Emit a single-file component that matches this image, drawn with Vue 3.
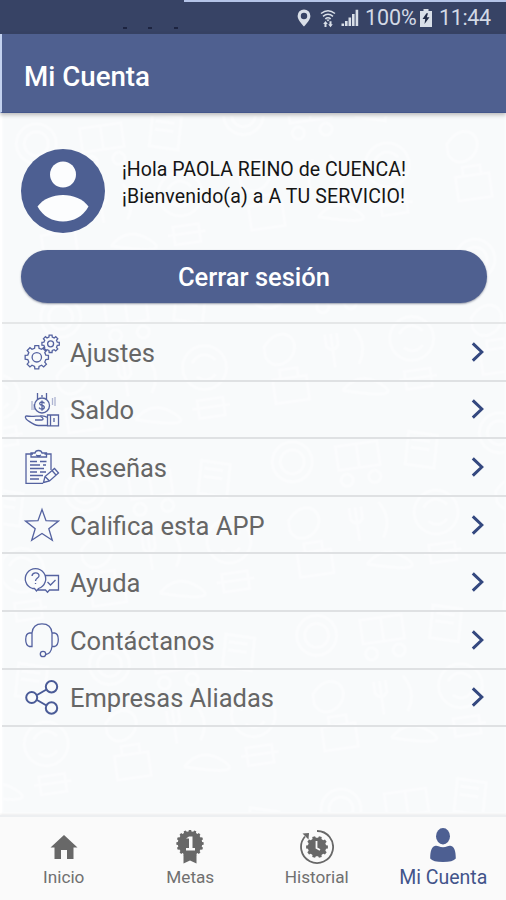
<script setup>
const gear = (cx, cy, ro, ri, n) => {
  const pts = []
  for (let i = 0; i < n; i++) {
    const a = (i * 2 * Math.PI) / n
    const w = Math.PI / n
    for (const [r, o] of [[ri, -0.62], [ro, -0.42], [ro, 0.42], [ri, 0.62]]) {
      pts.push(`${(cx + r * Math.cos(a + o * w)).toFixed(2)} ${(cy + r * Math.sin(a + o * w)).toFixed(2)}`)
    }
  }
  return `M${pts.join('L')}Z`
}
const items = [
  { id: 'gears', label: 'Ajustes' },
  { id: 'money', label: 'Saldo' },
  { id: 'notes', label: 'Reseñas' },
  { id: 'star', label: 'Califica esta APP' },
  { id: 'help', label: 'Ayuda' },
  { id: 'headset', label: 'Contáctanos' },
  { id: 'share', label: 'Empresas Aliadas' },
]
const bigGear = gear(11.8, 22.3, 11.8, 9.3, 8)
const smallGear = gear(25.6, 8.8, 8.8, 6.9, 8)
const rosette = gear(14, 13.5, 13.7, 12.2, 16)
const clockGear = gear(17, 18, 11, 9.2, 10)
</script>

<template>
  <div class="screen">
    <div class="status">
      <div class="edge"></div>
      <i class="speck s1"></i><i class="speck s2"></i><i class="speck s3"></i>
      <svg class="pin" viewBox="0 0 14 18"><path fill-rule="evenodd" d="M7 .5a6.4 6.4 0 0 0-6.4 6.4C.6 11 7 17.500 7 17.500S13.400 11 13.400 6.900A6.400 6.400 0 0 0 7 .5Zm0 3.300a3.200 3.200 0 1 1 0 6.400 3.200 3.200 0 0 1 0-6.400Z" /></svg>
      <svg class="wifi" viewBox="0 0 16 19">
        <path class="arc" d="M1 4.500Q8-1 15 4.500M3 7.300q5-4 10 0M5.300 9.800q2.700-2.200 5.400 0" />
        <path d="M6.200 10.500h3.600L8 12.600ZM5.500 12l2.300 3H6.500v3h-2v-3H3.200ZM10.500 18.200 8.200 15.200h1.300v-3h2v3h1.300Z" />
      </svg>
      <svg class="signal" viewBox="0 0 18 18"><path d="M.5 14.500h2.600V17H.5ZM4 12h2.600v5H4ZM7.500 8.500h2.600V17H7.500ZM11 5h2.600v12H11ZM14.600.8h2.600V17h-2.600Z" /></svg>
      <span class="pct">100%</span>
      <svg class="battery" viewBox="0 0 12 18"><path d="M3.500 0h5v2H12v16H0V2h3.500Z" /><path class="bolt" d="M6.500 4.300 2.500 10h2.700l-.7 5 5-6.700H6.800L8 4.300Z" /></svg>
      <span class="time">11:44</span>
    </div>
    <header class="bar"><h1>Mi Cuenta</h1></header>

    <main class="content">
      <svg class="doodles" viewBox="0 0 506 702">
        <defs>
          <pattern id="doodle" width="210" height="176" patternUnits="userSpaceOnUse" patternTransform="rotate(-8)">
            <circle cx="30" cy="34" r="20" /><circle cx="30" cy="34" r="12" />
            <path d="M75 25h42v24H75ZM82 54a6 6 0 1 0 .1 0M110 54a6 6 0 1 0 .1 0M96 25v24" />
            <path d="m150 20 28 8-8 32-28-8ZM152 28l18 5M150 36l18 5" />
            <path d="M18 92c16-20 34-8 30 6s-24 20-30 4ZM22 126h34v24H22ZM30 126v-9h18v9" />
            <path d="M86 88v34M80 88v12q6 8 12 0V88M110 86q12 18 0 36M90 146q20-18 40 0t-40 0" />
            <circle cx="166" cy="104" r="22" /><path d="M154 98q12-14 24 0M157 112q10 9 19 0M148 144h38M154 136h26v18h-26Z" />
          </pattern>
        </defs>
        <rect width="506" height="702" fill="url(#doodle)" />
      </svg>

      <section class="profile">
        <svg class="avatar" viewBox="0 0 84 84">
          <circle cx="42" cy="42" r="42" />
          <circle class="hole" cx="42" cy="25.500" r="13" />
          <path class="hole" d="M16.500 57.500C27 42 57 42 67.500 57.500C57 77.500 27 77.500 16.500 57.500Z" />
        </svg>
        <div class="greeting">
          <p class="g1">¡Hola PAOLA REINO de CUENCA!</p>
          <p class="g2">¡Bienvenido(a) a A TU SERVICIO!</p>
        </div>
      </section>
      <button class="logout">Cerrar sesión</button>

      <ul class="menu">
        <li v-for="it in items" :key="it.id">
          <svg class="icon" :class="it.id" viewBox="0 0 34 34">
            <template v-if="it.id === 'gears'">
              <path :d="bigGear" /><circle cx="11.800" cy="22.300" r="4.700" />
              <path :d="smallGear" /><circle cx="25.600" cy="8.800" r="3" />
            </template>
            <template v-else-if="it.id === 'money'">
              <circle cx="17" cy="13.500" r="7.500" />
              <path d="M19.500 11.300q-1-1.500-2.800-1.300c-3 .4-2.500 3 .3 3.400 3.200.5 3 3.600-.2 3.700q-1.800 0-2.800-1.500M17 8.500v10.200" />
              <path d="M12.500 1v6M21.500 1v6M17 3v2" />
              <path class="soft" d="M7 9v9M9 12v6M27.500 6v7M30 5v9" />
              <path d="M22.500 25.500c-3-2-5-2-7.500-1.500-4 0-8 1-13.500 0-2 0-1 3 1 4.200 5 3.500 7 5.300 11 5.300h9M10 28h6.500c2 0 2.500-2-1-3.500M22.500 23h3v10.800h-3ZM25.500 23H33.500v10.800h-8M29 26v4" />
            </template>
            <template v-else-if="it.id === 'notes'">
              <path d="M8 4H1v29.300h17M19.500 4H26v16M6 6V3h4q.5-2.500 3.500-2.500T17 3h4.500v4H6ZM11 5q2.500 1.500 5 0" />
              <path d="M5 11.500h7M15 11.500h6.500M5 15h10M18 15h3M5 18.500h14M5 22h7M15 22h6M5 25.500h13M5 29h9" />
              <path d="m18.500 32.500 1.500-6L29.500 18.500l4 4.500-9 8ZM27 20.500l4 4.500M20 26.500l4.500 4.500" />
            </template>
            <path v-else-if="it.id === 'star'" d="m17 1.500 4 11.200 12.500.3-9.700 7.700 3.500 11.500L17 25.500 6.700 32.200l3.500-11.500L.5 13l12.500-.3Z" />
            <template v-else-if="it.id === 'help'">
              <path d="M7.500 23.500A10.200 10.200 0 1 1 13.500 23.500L11.500 26 9.500 23.500ZM20.500 10.500H33.500v14.500H24.500L22.500 27.200 20.500 25h-8M7 11c.5-4.500 7.500-3.800 7 0-.3 2-3.500 2.200-3.500 5M10.500 18v1M22.500 17l3 3 5-5" />
            </template>
            <template v-else-if="it.id === 'headset'">
              <path d="M7 10C7.500 3.500 12 .8 17 .8s9.500 2.700 10 9.200M7 10H4.500Q.7 10.500.7 16.500T4.500 23.500H7ZM27 10H29.500Q33.300 10.500 33.300 16.500T29.500 23.500H27ZM27 23.500q-1 7.500-6.500 8" />
              <circle cx="18" cy="31" r="2.700" />
            </template>
            <template v-else>
              <circle cx="6.700" cy="17.500" r="5.500" /><circle cx="26.500" cy="6.800" r="5.700" /><circle cx="26.500" cy="28" r="5.700" />
              <path d="M12 15 21.500 9.500M12 20l9.500 5.500" />
            </template>
          </svg>
          <span class="label">{{ it.label }}</span>
          <svg class="chev" viewBox="0 0 13 20"><path d="m1.800 1.300 9 8.700-9 8.700" /></svg>
        </li>
      </ul>
    </main>

    <nav class="tabs">
      <div class="tab">
        <svg class="ic-home" viewBox="0 0 28 24"><path d="M14 0 27.500 12.500h-4V24h-6.500v-9h-6v9H4.500V12.500H.5Z" /></svg>
        <span>Inicio</span>
      </div>
      <div class="tab">
        <svg class="ic-medal" viewBox="0 0 28 34">
          <path :d="rosette" /><path d="M7.500 22v11.500l6.500-3 6.500 3V22Z" />
          <path class="light" d="M10 8.500 13 6.500h3.500v11.500h2.500v2.500h-9V18h3v-9.500Z" />
        </svg>
        <span>Metas</span>
      </div>
      <div class="tab">
        <svg class="ic-history" viewBox="0 0 34 36">
          <path class="ring" d="M17 2A16 16 0 1 1 5 7.500" />
          <path d="M2.500 4.500 9 4l-.5 6.500Z" /><path :d="clockGear" />
          <path class="hands" d="M16.500 12v7l3.500 2" />
        </svg>
        <span>Historial</span>
      </div>
      <div class="tab active">
        <svg class="ic-user" viewBox="0 0 26 34"><ellipse cx="13" cy="8.300" rx="7" ry="8.200" /><path d="M5.500 17.800Q7 17.500 8.500 18.300Q13 20.300 17.500 18.300Q19 17.500 20.500 17.800C24.500 18.800 25.800 23 25.800 30.500Q23 34 13 34Q3 34 .2 30.500C.2 23 1.500 18.800 5.500 17.800Z" /></svg>
        <span>Mi Cuenta</span>
      </div>
    </nav>
  </div>
</template>

<style>
body { margin: 0; background: #fff; }
</style>
<style scoped>
* { box-sizing: border-box; }
.screen { width: 506px; height: 900px; display: flex; flex-direction: column; overflow: hidden; font-family: Roboto, sans-serif; background: #f8fafb; }
.status { position: relative; height: 34px; flex: none; background: #374365; display: flex; align-items: center; padding: 2px 15px 0 0; justify-content: flex-end; color: #d3d9e5; }
.edge { position: absolute; top: 0; right: 0; width: 322px; height: 2px; background: #b4c4e8; }
.speck { position: absolute; top: 27px; width: 4px; height: 1.500px; background: #1d2440; }
.s1 { left: 123px; } .s2 { left: 148px; } .s3 { left: 174px; }
.status svg { fill: #d9dfe8; flex: none; }
.pin { width: 14px; height: 18px; margin-right: 9px; }
.wifi { width: 16px; height: 19px; margin-right: 5px; }
.wifi .arc { fill: none; stroke: #d9dfe8; stroke-width: 1.500; }
.signal { width: 18px; height: 18px; margin-right: 6px; }
.pct, .time { font-size: 21.500px; line-height: 32px; white-space: nowrap; }
.pct { width: 50px; margin-right: 5px; letter-spacing: -.1px; }
.battery { width: 12px; height: 18px; margin-right: 7px; }
.status .bolt { fill: #202a45; }
.time { width: 52px; letter-spacing: -.35px; }
.bar { height: 79px; flex: none; background: #4f6090; border-left: 2px solid #c3d2f0; border-bottom: 1px solid #44568b; padding-left: 22px; display: flex; align-items: center; padding-top: 8px; position: relative; z-index: 1; box-shadow: 0 2px 4px rgba(60, 60, 60, .35); }
h1 { margin: 0; color: #fff; font-size: 27.700px; font-weight: 500; line-height: 32px; }
.content { position: relative; height: 702px; flex: none; border-left: 2px solid #fff; }
.doodles { position: absolute; inset: 0; width: 504px; height: 702px; fill: none; stroke: #fbfcfd; stroke-width: 3; }
.profile { position: relative; display: flex; padding: 36px 0 0 19px; height: 137px; }
.avatar { width: 84px; height: 84px; fill: #4d5f92; flex: none; }
.avatar .hole { fill: #fcfdfe; }
.greeting { padding: 7px 0 0 17px; color: #151515; font-size: 19.500px; line-height: 27px; white-space: nowrap; }
.greeting p { margin: 0; }
.g1 { letter-spacing: .05px; }
.g2 { letter-spacing: .12px; }
.logout { position: relative; display: block; width: 466px; height: 53px; margin: 0 0 0 19px; padding: 1px 0 0; border: 0; border-radius: 27px; background: #4f6090; color: #fff; font: 500 25.500px/30px Roboto, sans-serif; box-shadow: 0 1px 2px rgba(50, 60, 90, .5); }
.menu { position: relative; list-style: none; margin: 19px 0 0; padding: 0; border-top: 2px solid #e5e7e8; }
.menu li { height: 57.600px; border-bottom: 2px solid #dfe1e3; display: flex; align-items: center; padding: 0 22px 0 22.500px; }
.icon { width: 34px; height: 34px; fill: none; stroke: #5462a0; stroke-width: 1.300; flex: none; overflow: visible; }
.icon.share { stroke-width: 2; stroke: #4a5b97; }
.icon .soft { opacity: .45; }
.label { flex: 1; padding-left: 11.500px; color: #666; font-size: 25.500px; line-height: 32px; white-space: nowrap; padding-top: 2px; }
.chev { width: 13px; height: 20px; fill: none; stroke: #34487f; stroke-width: 3; }
.tabs { height: 85px; flex: none; border-top: 2px solid #edeff1; background: #fafafa; display: grid; grid-template-columns: repeat(4, 126.500px); box-shadow: 0 -1px 2px #eee; position: relative; }
.tab { display: flex; flex-direction: column; align-items: center; justify-content: flex-end; color: #707070; font-size: 17.200px; line-height: 22px; padding: 0 0 12px 1px; }
.tab svg { fill: #686868; }
.tab .light { fill: #fafafa; }
.ic-home { width: 28px; height: 24px; margin-bottom: 7px; }
.ic-medal { width: 28px; height: 34px; margin-bottom: 2px; }
.ic-history { width: 34px; height: 36px; margin-bottom: 1px; }
.tab .ring { fill: none; stroke: #686868; stroke-width: 1.800; }
.tab .hands { fill: none; stroke: #fafafa; stroke-width: 1.800; }
.tab svg.ic-user { width: 26px; height: 34px; fill: #4d5f92; margin-bottom: 5px; }
.tab.active { color: #42548a; font-size: 19.500px; padding-bottom: 11px; }
</style>
